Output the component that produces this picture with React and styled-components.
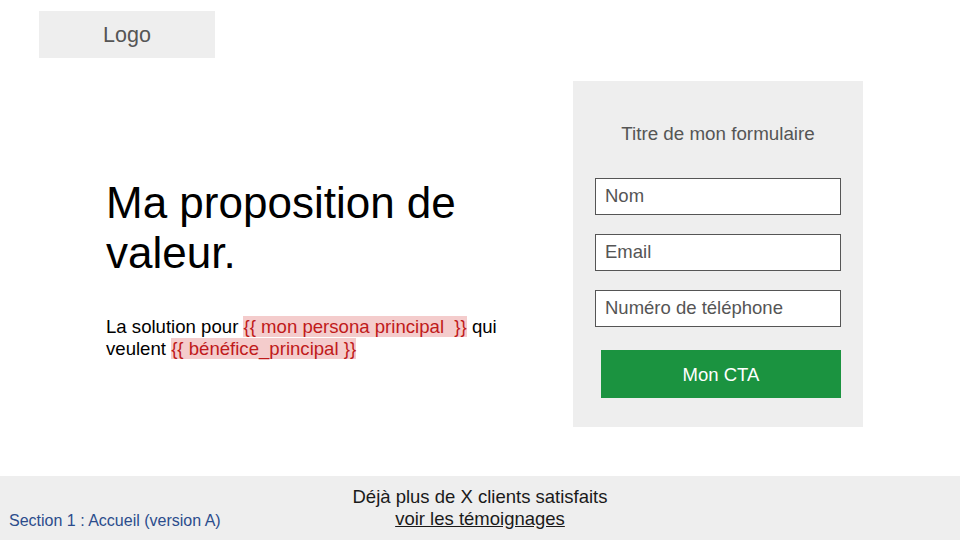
import * as React from 'react';
import styled, { createGlobalStyle } from 'styled-components';

const GlobalStyle = createGlobalStyle`
  * {
    box-sizing: border-box;
  }
  body {
    margin: 0;
    background: #ffffff;
    font-family: "Liberation Sans", Arial, sans-serif;
  }
`;

const Page = styled.div`
  width: 960px;
  height: 540px;
  display: flex;
  flex-direction: column;
  overflow: hidden;
`;

const Header = styled.header`
  display: flex;
  padding: 11px 0 0 39px;
`;

const LogoBox = styled.div`
  width: 176px;
  height: 47px;
  background: #eeeeee;
  color: #555555;
  font-size: 21.5px;
  display: flex;
  align-items: center;
  justify-content: center;
  padding-top: 1px;
`;

const Main = styled.main`
  display: flex;
  margin-top: 23px;
`;

const Hero = styled.section`
  width: 573px;
  padding: 97px 40px 0 106px;
`;

const Headline = styled.h1`
  margin: 0;
  font-size: 44px;
  line-height: 50px;
  font-weight: normal;
  color: #000000;
`;

const Pitch = styled.p`
  margin: 38px 0 0;
  font-size: 18.6px;
  line-height: 22px;
  color: #000000;
  max-width: 420px;
`;

const Placeholder = styled.span`
  background: #f4cccc;
  color: #c01a1a;
`;

const FormPanel = styled.form`
  width: 290px;
  height: 346px;
  background: #eeeeee;
  padding: 42px 22px 0 22px;
  display: flex;
  flex-direction: column;
`;

const FormTitle = styled.h2`
  margin: 0 0 33px;
  font-size: 18.8px;
  line-height: 22px;
  font-weight: normal;
  color: #555555;
  text-align: center;
`;

const Field = styled.div`
  height: 37px;
  background: #ffffff;
  border: 1px solid #555555;
  color: #555555;
  font-size: 18.5px;
  padding-left: 9px;
  display: flex;
  align-items: center;
  padding-bottom: 2px;
  margin-bottom: ${(p) => (p.last ? '23px' : '19px')};
`;

const CtaButton = styled.button`
  margin-left: 6px;
  height: 48px;
  border: none;
  background: #1b9340;
  color: #ffffff;
  font-family: "Liberation Sans", Arial, sans-serif;
  font-size: 18.5px;
  padding: 1px 0 0;
`;

const Footer = styled.footer`
  margin-top: auto;
  height: 64px;
  background: #eeeeee;
  display: grid;
  grid-template-columns: 1fr auto 1fr;
  padding: 0 9px;
`;

const SectionLabel = styled.div`
  align-self: end;
  padding-bottom: 10px;
  font-size: 16px;
  line-height: 18px;
  color: #2b4c8c;
`;

const Proof = styled.div`
  padding-top: 10px;
  text-align: center;
  font-size: 18.5px;
  line-height: 22px;
  color: #1a1a1a;
`;

const ProofLink = styled.a`
  color: #1a1a1a;
  text-decoration: underline;
`;

const fields = ['Nom', 'Email', 'Numéro de téléphone'];

export default function App() {
  return (
    <Page>
      <GlobalStyle />
      <Header>
        <LogoBox>Logo</LogoBox>
      </Header>

      <Main>
        <Hero>
          <Headline>
            Ma proposition de
            <br />
            valeur.
          </Headline>
          <Pitch>
            La solution pour <Placeholder>{'{{ mon persona principal\u00a0 }}'}</Placeholder> qui
            veulent <Placeholder>{'{{ bénéfice_principal }}'}</Placeholder>
          </Pitch>
        </Hero>

        <FormPanel>
          <FormTitle>Titre de mon formulaire</FormTitle>
          {fields.map((label, i) => (
            <Field key={label} last={i === fields.length - 1}>
              {label}
            </Field>
          ))}
          <CtaButton type="button">Mon CTA</CtaButton>
        </FormPanel>
      </Main>

      <Footer>
        <SectionLabel>Section 1 : Accueil (version A)</SectionLabel>
        <Proof>
          Déjà plus de X clients satisfaits
          <br />
          <ProofLink href="#">voir les témoignages</ProofLink>
        </Proof>
        <div />
      </Footer>
    </Page>
  );
}
